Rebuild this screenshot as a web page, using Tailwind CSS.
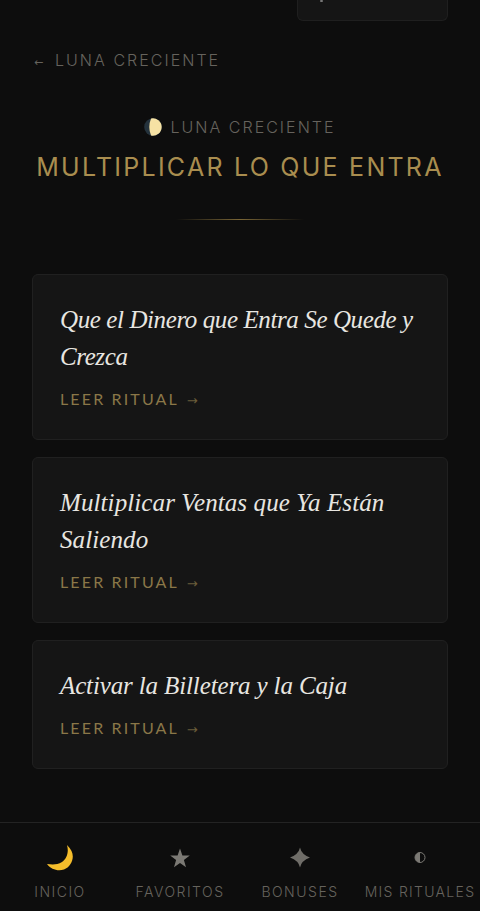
<!DOCTYPE html>
<html lang="es">

<head>
    <meta charset="UTF-8">
    <meta name="viewport" content="width=device-width, initial-scale=1.0">
    <title>Multiplicar lo que entra</title>
    <script src="https://cdn.jsdelivr.net/npm/@tailwindcss/browser@4"></script>
</head>

<body class="h-[911px] w-[480px] overflow-hidden bg-[#0d0d0d] font-['Inter',sans-serif] flex flex-col">
    <main class="flex-1 px-8">
        <!-- search box, scrolled almost out of view -->
        <div class="flex justify-end">
            <div class="w-[151px] h-[21px] bg-[#151515] border border-t-0 border-[#1f1f1f] rounded-b-md relative overflow-hidden">
                <span class="absolute left-[22px] top-0 w-[3px] h-[2px] bg-[#777] rounded-full"></span>
            </div>
        </div>

        <a class="flex items-baseline mt-[29px] h-5 text-[#66635d] leading-5">
            <span class="w-[23px] pl-[2px] font-['DejaVu_Sans',sans-serif] text-[11px]">←</span>
            <span class="text-[16px] tracking-[2.03px] font-light">LUNA CRECIENTE</span>
        </a>

        <!-- heading -->
        <div class="mt-[47px] flex flex-col items-center">
            <div class="flex items-center h-5">
                <svg class="w-[18px] h-[18px] mr-[8px]" viewBox="0 0 18 18">
                    <circle cx="9" cy="9" r="8.8" fill="#24323c"/>
                    <path d="M7 .4 A8.8 8.8 0 1 1 7 17.6 Q3.6 9 7 .4Z" fill="#f6e2a4"/>
                </svg>
                <span class="text-[16px] tracking-[2.03px] font-light text-[#66635d] leading-5">LUNA CRECIENTE</span>
            </div>
            <h1 class="mt-[14px] text-[25px] leading-[32px] tracking-[2.25px] text-[#a98d4f] whitespace-nowrap">MULTIPLICAR LO QUE ENTRA</h1>
            <div class="mt-[36px] w-[128px] h-px bg-gradient-to-r from-transparent via-[#7a6636] to-transparent"></div>
        </div>

        <!-- ritual list -->
        <div class="mt-[54px] flex flex-col gap-[17px]">
            <div class="bg-[#151515] border border-[#202020] rounded-md px-[27px] pt-[26px] pb-[28px]">
                <h2 class="font-['Liberation_Serif',serif] italic text-[25px] tracking-[-0.4px] leading-[37px] text-[#e8e6e1]">Que el Dinero que Entra Se Quede y Crezca</h2>
                <p class="mt-[14px] text-[16px] leading-5 tracking-[2.15px] text-[#8a7748] font-['Lato',sans-serif]">LEER RITUAL <span class="font-['DejaVu_Sans',sans-serif] text-[13px] ml-0.5 text-[#6b5d3a]">→</span></p>
            </div>
            <div class="bg-[#151515] border border-[#202020] rounded-md px-[27px] pt-[26px] pb-[28px]">
                <h2 class="font-['Liberation_Serif',serif] italic text-[25px] tracking-[0.1px] leading-[37px] text-[#e8e6e1]">Multiplicar Ventas que Ya Están Saliendo</h2>
                <p class="mt-[14px] text-[16px] leading-5 tracking-[2.15px] text-[#8a7748] font-['Lato',sans-serif]">LEER RITUAL <span class="font-['DejaVu_Sans',sans-serif] text-[13px] ml-0.5 text-[#6b5d3a]">→</span></p>
            </div>
            <div class="bg-[#151515] border border-[#202020] rounded-md px-[27px] pt-[26px] pb-[28px]">
                <h2 class="font-['Liberation_Serif',serif] italic text-[25px] tracking-[-0.13px] leading-[37px] text-[#e8e6e1]">Activar la Billetera y la Caja</h2>
                <p class="mt-[14px] text-[16px] leading-5 tracking-[2.15px] text-[#8a7748] font-['Lato',sans-serif]">LEER RITUAL <span class="font-['DejaVu_Sans',sans-serif] text-[13px] ml-0.5 text-[#6b5d3a]">→</span></p>
            </div>
        </div>
    </main>

    <!-- bottom nav -->
    <nav class="h-[89px] border-t border-[#232323] grid grid-cols-4 text-[14px] tracking-[1.5px] font-light text-[#66635d] leading-4">
        <div class="flex flex-col items-center pt-[21px]">
            <svg class="w-[28px] h-[28px]" viewBox="0 0 28 28">
                <path d="M21 1 C23 8 21 15 16 18 C11 21 6 20.5 1 20 C5 25.5 12 27.5 18 25.5 C25 23 29 14 25.5 7 C24.5 5 23 3 21 1Z" fill="#f5bd2b"/>
            </svg>
            <span class="mt-[12px]">INICIO</span>
        </div>
        <div class="flex flex-col items-center pt-[21px]">
            <svg class="w-[28px] h-[28px]" viewBox="0 0 28 28">
                <path d="M14 4.5 L16.4 11.6 L23.8 11.6 L17.9 16.1 L20 23.2 L14 19 L8 23.2 L10.1 16.1 L4.2 11.6 L11.6 11.6Z" fill="#7b7974"/>
            </svg>
            <span class="mt-[12px]">FAVORITOS</span>
        </div>
        <div class="flex flex-col items-center pt-[21px]">
            <svg class="w-[28px] h-[28px]" viewBox="0 0 28 28">
                <path d="M14 3.5 Q15.5 10.5 24 13.5 Q15.5 16.5 14 23.5 Q12.5 16.5 4 13.5 Q12.5 10.5 14 3.5Z" fill="#6f6d68"/>
            </svg>
            <span class="mt-[12px]">BONUSES</span>
        </div>
        <div class="flex flex-col items-center pt-[21px]">
            <svg class="w-[28px] h-[28px]" viewBox="0 0 28 28">
                <circle cx="14" cy="13.5" r="5" fill="none" stroke="#7b7974" stroke-width="1"/>
                <path d="M14 8.5 A5 5 0 0 0 14 18.5Z" fill="#7b7974"/>
            </svg>
            <span class="mt-[12px] whitespace-nowrap tracking-[1.3px]">MIS RITUALES</span>
        </div>
    </nav>
</body>

</html>
